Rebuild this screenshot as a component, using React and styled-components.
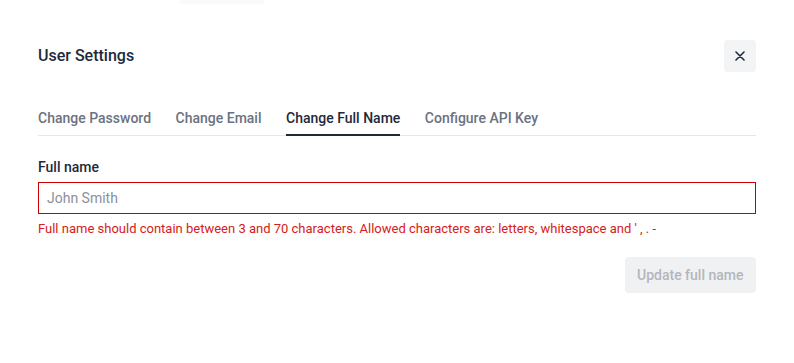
import React from "react";
import styled, { createGlobalStyle } from "styled-components";

const Global = createGlobalStyle`
  html, body { margin: 0; padding: 0; background: #ffffff; }
  body { font-family: Roboto, "Noto Sans", Arial, sans-serif; -webkit-font-smoothing: antialiased; }
  * { box-sizing: border-box; }
`;

const Page = styled.div`
  width: 794px;
  height: 363px;
  background: #ffffff;
  display: flex;
  flex-direction: column;
`;

const BackdropStrip = styled.div`
  margin-left: 180px;
  width: 84px;
  height: 4px;
  background: #fafafb;
`;

const Modal = styled.div`
  padding: 36px 38px 0 38px;
  display: flex;
  flex-direction: column;
`;

const Header = styled.div`
  display: flex;
  align-items: center;
  justify-content: space-between;
  height: 32px;
`;

const Title = styled.h2`
  margin: 0;
  font-size: 16px;
  font-weight: 500;
  color: #1e293b;
  line-height: 20px;
`;

const CloseButton = styled.button`
  width: 32px;
  height: 32px;
  border: none;
  border-radius: 4px;
  background: #f3f4f6;
  display: flex;
  align-items: center;
  justify-content: center;
  padding: 0;
  cursor: pointer;
`;

const TabList = styled.div`
  margin-top: 26px;
  display: flex;
  gap: 24.5px;
  border-bottom: 1px solid #e5e7eb;
`;

const Tab = styled.button`
  border: none;
  background: none;
  padding: 10px 0 6px;
  font-family: inherit;
  font-size: 14px;
  line-height: 20px;
  font-weight: 500;
  color: ${(p) => (p.$active ? "#1e293b" : "#6b7280")};
  border-bottom: 2px solid ${(p) => (p.$active ? "#1e293b" : "transparent")};
  margin-bottom: -1px;
  cursor: pointer;
`;

const Form = styled.div`
  margin-top: 21px;
  display: flex;
  flex-direction: column;
`;

const Label = styled.label`
  font-size: 14px;
  line-height: 20px;
  font-weight: 500;
  color: #1e293b;
`;

const Input = styled.input`
  margin-top: 5px;
  height: 32px;
  width: 100%;
  border: 1px solid #cc0000;
  border-radius: 0;
  padding: 0 8px;
  font-family: inherit;
  font-size: 14px;
  color: #1e293b;
  outline: none;
  &::placeholder { color: #8b909a; }
`;

const ErrorText = styled.div`
  margin-top: 6px;
  font-size: 13px;
  line-height: 18px;
  color: #d62020;
`;

const Footer = styled.div`
  margin-top: 19px;
  display: flex;
  justify-content: flex-end;
`;

const SubmitButton = styled.button`
  height: 36px;
  padding: 0 12.5px;
  border: none;
  border-radius: 4px;
  background: #f0f1f3;
  color: #b3b6bd;
  font-family: inherit;
  font-size: 14px;
  font-weight: 500;
  cursor: not-allowed;
`;

const tabs = ["Change Password", "Change Email", "Change Full Name", "Configure API Key"];

export default function App() {
  return (
    <>
      <Global />
      <Page>
        <BackdropStrip />
        <Modal>
          <Header>
            <Title>User Settings</Title>
            <CloseButton aria-label="Close">
              <svg width="10" height="10" viewBox="0 0 10 10">
                <path d="M1 1L9 9M9 1L1 9" stroke="#1e293b" strokeWidth="1.6" strokeLinecap="round" />
              </svg>
            </CloseButton>
          </Header>
          <TabList>
            {tabs.map((t) => (
              <Tab key={t} $active={t === "Change Full Name"}>{t}</Tab>
            ))}
          </TabList>
          <Form>
            <Label>Full name</Label>
            <Input placeholder="John Smith" />
            <ErrorText>
              Full name should contain between 3 and 70 characters. Allowed characters are: letters, whitespace and ' , . -
            </ErrorText>
            <Footer>
              <SubmitButton disabled>Update full name</SubmitButton>
            </Footer>
          </Form>
        </Modal>
      </Page>
    </>
  );
}
